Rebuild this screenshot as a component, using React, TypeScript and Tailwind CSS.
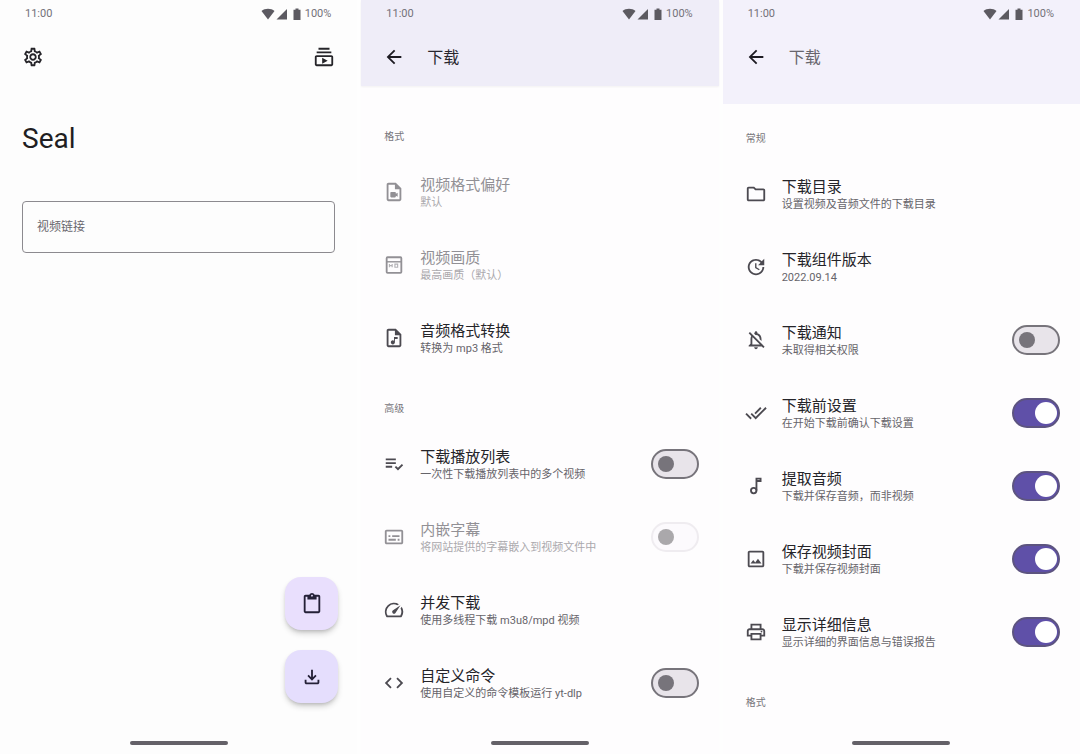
import React from 'react';
import type { ReactNode } from 'react';
import {
  MdArrowBack,
  MdCode,
  MdDoneAll,
  MdOutlineAudioFile,
  MdOutlineContentPaste,
  MdOutlineFileDownload,
  MdOutlineFolder,
  MdOutlineImage,
  MdOutlineNotificationsOff,
  MdOutlinePrint,
  MdOutlineSettings,
  MdOutlineSpeed,
  MdOutlineSubscriptions,
  MdOutlineSubtitles,
  MdOutlineVideoFile,
  MdPlaylistAddCheck,
  MdUpdate,
} from 'react-icons/md';

type Item = {
  title: string;
  desc: string;
  icon: ReactNode;
  toggle?: boolean;
  disabled?: boolean;
};

const QualityIcon = () => (
  <svg width="22" height="22" viewBox="0 0 24 24" fill="none" stroke="currentColor" strokeWidth="2">
    <rect x="4" y="3.500" width="16" height="17" rx="1" />
    <path d="M4 8.500h16" strokeWidth="1.500" />
    <path d="M7 11v3.500M7 12.700h3M10 11v3.500M13 11v3.500h3V11z" strokeWidth="1.200" opacity=".7" />
  </svg>
);

const NoteIcon = () => (
  <svg width="22" height="22" viewBox="0 0 24 24" fill="none" stroke="currentColor" strokeWidth="2">
    <circle cx="9.500" cy="17" r="3" />
    <path d="M12.500 17V4H17v2.500h-4.500" />
  </svg>
);

const formatItems: Item[] = [
  { title: '视频格式偏好', desc: '默认', icon: <MdOutlineVideoFile size={22} />, disabled: true },
  { title: '视频画质', desc: '最高画质（默认）', icon: <QualityIcon />, disabled: true },
  { title: '音频格式转换', desc: '转换为 mp3 格式', icon: <MdOutlineAudioFile size={22} /> },
];

const advancedItems: Item[] = [
  { title: '下载播放列表', desc: '一次性下载播放列表中的多个视频', icon: <MdPlaylistAddCheck size={22} />, toggle: false },
  { title: '内嵌字幕', desc: '将网站提供的字幕嵌入到视频文件中', icon: <MdOutlineSubtitles size={22} />, toggle: false, disabled: true },
  { title: '并发下载', desc: '使用多线程下载 m3u8/mpd 视频', icon: <MdOutlineSpeed size={22} /> },
  { title: '自定义命令', desc: '使用自定义的命令模板运行 yt-dlp', icon: <MdCode size={22} />, toggle: false },
];

const generalItems: Item[] = [
  { title: '下载目录', desc: '设置视频及音频文件的下载目录', icon: <MdOutlineFolder size={22} /> },
  { title: '下载组件版本', desc: '2022.09.14', icon: <MdUpdate size={22} /> },
  { title: '下载通知', desc: '未取得相关权限', icon: <MdOutlineNotificationsOff size={22} />, toggle: false },
  { title: '下载前设置', desc: '在开始下载前确认下载设置', icon: <MdDoneAll size={22} />, toggle: true },
  { title: '提取音频', desc: '下载并保存音频，而非视频', icon: <NoteIcon />, toggle: true },
  { title: '保存视频封面', desc: '下载并保存视频封面', icon: <MdOutlineImage size={22} />, toggle: true },
  { title: '显示详细信息', desc: '显示详细的界面信息与错误报告', icon: <MdOutlinePrint size={22} />, toggle: true },
];

function StatusBar() {
  return (
    <div className="flex h-7 items-center justify-between pr-[26px] pl-[25px] text-[11px] leading-4 text-[#737178]">
      <span>11:00</span>
      <div className="flex items-center">
        <svg width="44" height="14" viewBox="0 0 44 14" fill="currentColor" className="text-[#5c5a61]">
          <path d="M.5 4C3.800 1 10.200 1 13.500 4L7 12.500z" />
          <path d="M26 2v10.500H15.500z" />
          <path d="M34.500 1.500h3v1.200H39.500v10.300h-7V2.700h2z" />
        </svg>
        <span>100%</span>
      </div>
    </div>
  );
}

function HomeIndicator() {
  return (
    <div className="flex h-[22px] shrink-0 justify-center pt-[9px]">
      <div className="h-1 w-[98px] rounded-full bg-[#646168]" />
    </div>
  );
}

function Switch({ label, checked, disabled }: { label: string; checked: boolean; disabled?: boolean }) {
  return (
    <input
      type="checkbox"
      role="switch"
      aria-label={label}
      defaultChecked={checked}
      disabled={disabled}
      className="flex h-[30px] w-12 shrink-0 appearance-none items-center rounded-full border-2 border-[#77747b] bg-[#e8e4ea] px-[5px] before:size-4 before:rounded-full before:bg-[#77747b] checked:justify-end checked:border-[#5d5480] checked:bg-[#5f50a8] checked:px-px checked:before:size-[22px] checked:before:bg-white disabled:border-[#efecf0] disabled:bg-[#fcfafd] disabled:before:bg-[#aaa8ab]"
    />
  );
}

function SettingRow({ item }: { item: Item }) {
  return (
    <li className={`flex h-[73px] items-center pr-5 pl-[22px] ${item.disabled ? 'text-[#929095]' : 'text-[#252429]'}`}>
      <span className={`mr-[15px] shrink-0 ${item.disabled ? 'text-[#929095]' : 'text-[#4c4a51]'}`}>{item.icon}</span>
      <div className="min-w-0 flex-1 pt-[3px]">
        <h3 className="text-[15px] leading-5">{item.title}</h3>
        <p className={`text-[11px] leading-4 whitespace-nowrap ${item.disabled ? 'text-[#aaa8ac]' : 'text-[#66646a]'}`}>{item.desc}</p>
      </div>
      {item.toggle !== undefined && <Switch label={item.title} checked={item.toggle} disabled={item.disabled} />}
    </li>
  );
}

function SectionTitle({ children }: { children: ReactNode }) {
  return <h2 className="pl-[23px] text-[10px] leading-4 text-[#77757b]">{children}</h2>;
}

function HomeScreen() {
  return (
    <section className="flex flex-col bg-[#fdfdfd]">
      <StatusBar />
      <div className="flex h-[58px] items-center justify-between px-[22px] text-[#252429]">
        <button aria-label="设置"><MdOutlineSettings size={22} /></button>
        <button aria-label="下载列表"><MdOutlineSubscriptions size={22} /></button>
      </div>
      <h1 className="mt-[33px] px-[22px] text-[28px] leading-10 text-[#1f1e22]">Seal</h1>
      <div className="px-[22px] pt-[42px]">
        <input
          type="text"
          aria-label="视频链接"
          placeholder="视频链接"
          className="h-[52px] w-full rounded border border-[#8c8a8f] bg-transparent px-[14px] text-xs text-[#252429] placeholder:text-[#69676d]"
        />
      </div>
      <div className="mt-auto mb-[29px] flex flex-col items-end gap-5 pr-[19px] text-[#242037]">
        <button aria-label="粘贴" className="flex size-[53px] items-center justify-center rounded-2xl bg-[#e9dffd] shadow-md shadow-black/20">
          <MdOutlineContentPaste size={22} />
        </button>
        <button aria-label="下载" className="flex size-[53px] items-center justify-center rounded-2xl bg-[#e5defd] shadow-md shadow-black/20">
          <MdOutlineFileDownload size={22} />
        </button>
      </div>
      <HomeIndicator />
    </section>
  );
}

function TopBar({ className, titleClass }: { className: string; titleClass: string }) {
  return (
    <header className={className}>
      <StatusBar />
      <div className="flex h-[58px] items-center gap-[22px] pl-[22px]">
        <button aria-label="返回" className="text-[#1d1b22]"><MdArrowBack size={22} /></button>
        <h1 className={`pt-0.5 text-base leading-6 ${titleClass}`}>下载</h1>
      </div>
    </header>
  );
}

export default function App() {
  return (
    <main className="grid min-h-screen grid-cols-3 gap-x-1 bg-[#fefefe] font-[Roboto,'Noto_Sans_CJK_SC',sans-serif]">
      <HomeScreen />

      <section className="flex flex-col bg-[#fefdfe]">
        <TopBar className="h-[86px] bg-[#efedf8] shadow-xs" titleClass="text-[#29272e]" />
        <div className="pt-[43px]">
          <SectionTitle>格式</SectionTitle>
          <ul className="pt-[10px]">
            {formatItems.map(item => <SettingRow key={item.title} item={item} />)}
          </ul>
        </div>
        <div className="pt-[27px]">
          <SectionTitle>高级</SectionTitle>
          <ul className="pt-[10px]">
            {advancedItems.map(item => <SettingRow key={item.title} item={item} />)}
          </ul>
        </div>
        <div className="mt-auto"><HomeIndicator /></div>
      </section>

      <section className="flex flex-col bg-[#fefdfe]">
        <TopBar className="h-[104px] bg-[#f3f1fb]" titleClass="text-[#68666d]" />
        <div className="pt-[27px]">
          <SectionTitle>常规</SectionTitle>
          <ul className="pt-[10px]">
            {generalItems.map(item => <SettingRow key={item.title} item={item} />)}
          </ul>
        </div>
        <div className="pt-[27px]">
          <SectionTitle>格式</SectionTitle>
        </div>
        <div className="mt-auto"><HomeIndicator /></div>
      </section>
    </main>
  );
}
